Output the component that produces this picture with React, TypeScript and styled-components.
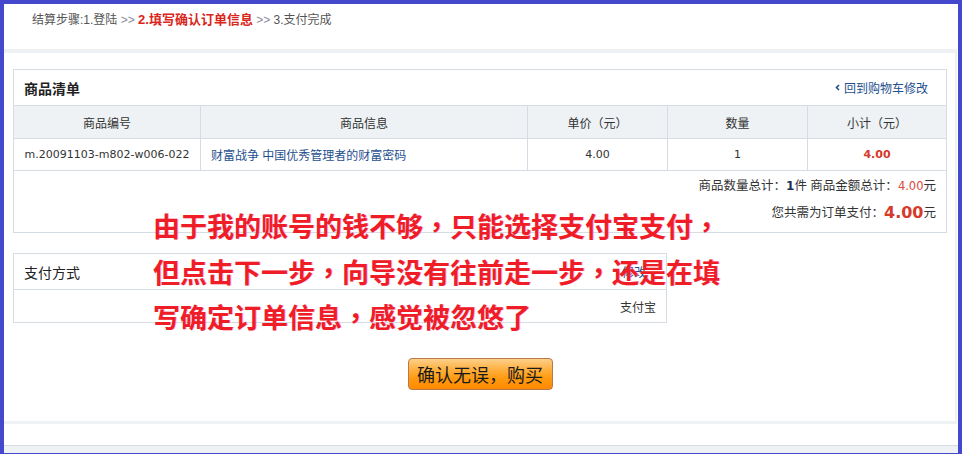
import React from "react";
import styled, { createGlobalStyle } from "styled-components";

const Global = createGlobalStyle`
  html, body { margin: 0; padding: 0; background: #fff; }
  body {
    font-family: "Liberation Sans", "Noto Sans CJK SC", sans-serif;
    font-size: 12px;
    color: #333;
  }
  * { box-sizing: border-box; }
`;

const Frame = styled.div`
  position: relative;
  width: 962px;
  height: 454px;
  border: 4px solid #4448cc;
  border-bottom-width: 1px;
  background: #fff;
  overflow: hidden;
`;

const Steps = styled.div`
  height: 45px;
  padding: 5px 0 0 28px;
  line-height: 22px;
  color: #555;
`;

const StepSep = styled.span`
  color: #8a8a9a;
`;

const StepCurrent = styled.span`
  color: #d9261c;
  font-weight: bold;
  font-size: 13px;
`;

const Panel = styled.div`
  margin-right: 1px;
  border-top: 4px solid #eef2f5;
  border-right: 2px solid #eef2f5;
  border-bottom: 3px solid #eef2f5;
  padding: 16px 0 31px 9px;
`;

const Box = styled.div<{ $w: number }>`
  width: ${(p) => p.$w}px;
  border: 1px solid #d6dce3;
`;

const BoxHead = styled.div<{ $h: number }>`
  height: ${(p) => p.$h}px;
  display: flex;
  align-items: center;
  justify-content: space-between;
  padding: 0 18px 0 10px;
`;

const BoxTitle = styled.div<{ $bold?: boolean }>`
  font-size: 14px;
  font-weight: ${(p) => (p.$bold ? "bold" : "normal")};
  color: #222;
`;

const BackLink = styled.a`
  display: flex;
  align-items: center;
  gap: 4px;
  color: #1e508e;
  text-decoration: none;
  font-size: 12px;
`;

const Row = styled.div<{ $h: number; $head?: boolean }>`
  display: grid;
  grid-template-columns: 186px 327px 140px 140px 139px;
  height: ${(p) => p.$h + 1}px;
  border-top: 1px solid #d6dce3;
  background: ${(p) => (p.$head ? "#eef2f5" : "#fff")};
`;

const Cell = styled.div<{ $align?: string; $color?: string; $bold?: boolean; $first?: boolean; $num?: boolean }>`
  display: flex;
  align-items: center;
  justify-content: ${(p) => p.$align || "center"};
  padding: 0 10px;
  border-left: ${(p) => (p.$first ? "none" : "1px solid #d6dce3")};
  color: ${(p) => p.$color || "#333"};
  font-weight: ${(p) => (p.$bold ? "bold" : "normal")};
  font-family: ${(p) => (p.$num ? '"DejaVu Sans", "Noto Sans CJK SC", sans-serif' : "inherit")};
  font-size: ${(p) => (p.$num ? "11px" : "12px")};
  white-space: nowrap;
`;

const Summary = styled.div`
  height: 62px;
  border-top: 1px solid #d6dce3;
  padding: 5px 10px 0 0;
  text-align: right;
  font-size: 12.5px;
`;

const SumLine = styled.div<{ $lh: number }>`
  line-height: ${(p) => p.$lh}px;
`;

const Count = styled.b`
  color: #1c2f55;
  font-family: "DejaVu Sans", sans-serif;
  font-size: 12px;
`;

const Money = styled.span<{ $big?: boolean }>`
  color: ${(p) => (p.$big ? "#d63a2a" : "#e0473a")};
  font-family: "DejaVu Sans", sans-serif;
  font-weight: ${(p) => (p.$big ? "bold" : "normal")};
  font-size: ${(p) => (p.$big ? "16px" : "11.5px")};
  vertical-align: ${(p) => (p.$big ? "-1px" : "baseline")};
`;

const Gap = styled.div<{ $h: number }>`
  height: ${(p) => p.$h}px;
`;

const PayRow = styled.div`
  height: 33px;
  border-top: 1px solid #d6dce3;
  display: flex;
  align-items: center;
  justify-content: flex-end;
  padding-right: 10px;
  color: #333;
`;

const EditLink = styled.a`
  color: #1e508e;
  text-decoration: none;
  font-size: 12px;
  margin-right: 2px;
`;

const Actions = styled.div`
  display: flex;
  justify-content: center;
  width: 934px;
`;

const BuyButton = styled.button`
  width: 145px;
  height: 32px;
  border: 1px solid #b8784a;
  border-radius: 4px;
  background: linear-gradient(#fcd08a 0%, #ffb040 35%, #ff9a10 65%, #ff8a00 100%);
  font-family: "Noto Sans CJK SC", sans-serif;
  font-size: 18px;
  line-height: 30px;
  color: #1a1a1a;
  padding: 0;
  cursor: pointer;
`;

const Footer = styled.div`
  margin-top: 21px;
  border-top: 1px solid #d5dbe0;
  height: 8px;
  background: #eef2f5;
`;

const Note = styled.div`
  position: absolute;
  left: 149px;
  top: 199px;
  font-family: "Noto Sans CJK SC", sans-serif;
  font-weight: bold;
  font-size: 27px;
  line-height: 45.5px;
  color: #ee1d26;
  white-space: nowrap;
  text-shadow: 1px 0 0 rgba(230, 60, 200, 0.35);
`;

const Punct = styled.span`
  font-family: "Noto Sans CJK TC", sans-serif;
`;

const Chevron = () => (
  <svg width="5" height="7" viewBox="0 0 5 7">
    <path d="M4 1 L1.5 3.5 L4 6" fill="none" stroke="#1e508e" strokeWidth="1.6" />
  </svg>
);

export default function App() {
  return (
    <>
      <Global />
      <Frame>
        <Steps>
          结算步骤:1.登陆 <StepSep>&gt;&gt;</StepSep> <StepCurrent>2.填写确认订单信息</StepCurrent>{" "}
          <StepSep>&gt;&gt;</StepSep> 3.支付完成
        </Steps>
        <Panel>
          <Box $w={934}>
            <BoxHead $h={35}>
              <BoxTitle $bold>商品清单</BoxTitle>
              <BackLink href="#">
                <Chevron />
                回到购物车修改
              </BackLink>
            </BoxHead>
            <Row $h={32} $head>
              <Cell $first>商品编号</Cell>
              <Cell>商品信息</Cell>
              <Cell>单价（元）</Cell>
              <Cell>数量</Cell>
              <Cell>小计（元）</Cell>
            </Row>
            <Row $h={31}>
              <Cell $first $num>
                m.20091103-m802-w006-022
              </Cell>
              <Cell $align="flex-start" $color="#1f4f8f">
                财富战争 中国优秀管理者的财富密码
              </Cell>
              <Cell $num>4.00</Cell>
              <Cell $num>1</Cell>
              <Cell $num $color="#d63a2a" $bold>
                4.00
              </Cell>
            </Row>
            <Summary>
              <SumLine $lh={20}>
                商品数量总计：<Count>1</Count>件 商品金额总计：<Money>4.00</Money>元
              </SumLine>
              <SumLine $lh={34}>
                您共需为订单支付：<Money $big>4.00</Money>元
              </SumLine>
            </Summary>
          </Box>
          <Gap $h={20} />
          <Box $w={654}>
            <BoxHead $h={35}>
              <BoxTitle>支付方式</BoxTitle>
              <EditLink href="#">修改</EditLink>
            </BoxHead>
            <PayRow>支付宝</PayRow>
          </Box>
          <Gap $h={35} />
          <Actions>
            <BuyButton>确认无误，购买</BuyButton>
          </Actions>
        </Panel>
        <Footer />
        <Note>
          由于我的账号的钱不够<Punct>，</Punct>只能选择支付宝支付<Punct>，</Punct>
          <br />
          但点击下一步<Punct>，</Punct>向导没有往前走一步<Punct>，</Punct>还是在填
          <br />
          写确定订单信息<Punct>，</Punct>感觉被忽悠了
        </Note>
      </Frame>
    </>
  );
}
